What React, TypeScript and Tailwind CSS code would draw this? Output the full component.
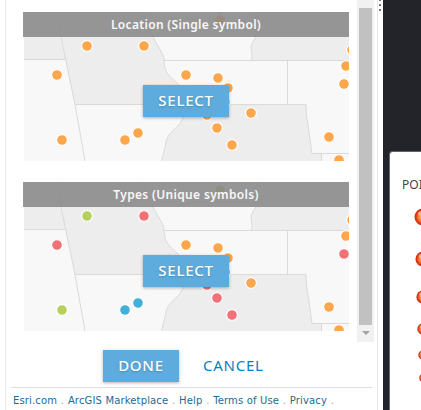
import React from "react";

const ORANGE = "#fda64b";
const RED = "#f07277";
const GREEN = "#b7cf5c";
const BLUE = "#42b0d9";

const points: [number, number, string][] = [
  [220, 20, GREEN],
  [87, 46, GREEN],
  [144, 46, RED],
  [57, 75, RED],
  [186, 75, ORANGE],
  [218, 78, ORANGE],
  [228, 88, ORANGE],
  [225, 102, RED],
  [207, 115, RED],
  [217, 128, RED],
  [232, 145, RED],
  [251, 113, ORANGE],
  [62, 140, GREEN],
  [125, 140, BLUE],
  [138, 133, BLUE],
  [329, 137, ORANGE],
  [339, 160, ORANGE],
  [344, 84, RED],
  [346, 66, ORANGE],
  [352, 50, ORANGE],
];

function MapPicture({ unique }: { unique: boolean }) {
  return (
    <svg viewBox="24 12 325 149" className="ml-px block h-[149px] w-[325px]">
      <rect x="24" y="12" width="325" height="149" fill="#f8f8f8" />
      <g fill="#ededed">
        <path d="M24 12H57L61 37L65.500 59.500H24Z" />
        <path d="M57 12H143L153 37C158 47 163.500 53 164 60C164 72 169 76 178 84L188 104.500H75L61 37Z" />
        <path d="M256 12V37C252 43 250 46 251.500 51Q253 56 251 60.500H349V12Z" />
        <path d="M188 104.500H306Q306 116 308 125L312 153.500H321.500V161H161.500C164 151 165 148 166.500 140C170 130 181 127 183.500 116Z" />
      </g>
      <g fill="none" stroke="#dadada" strokeWidth="1">
        <path d="M57 12L61 37L75 104.500L85 161M24 59.500H65.500M75 104.500H306Q306 116 308 125L312 153.500H349M321.500 153.500V161" />
        <path d="M143 12L153 37C158 47 163.500 53 164 60C164 72 169 76 178 84L188 104.500L183.500 116C181 127 170 130 166.500 140C165 148 164 151 161.500 161" />
        <path d="M164 60.500H349M287.500 60.500V104.500M256 12V37C252 43 250 46 251.500 51Q253 56 251 60.500" />
      </g>
      {points.map(([x, y, color]) => (
        <circle key={`${x}-${y}`} cx={x} cy={y} r="5.400" fill={unique ? color : ORANGE} stroke="#fff" strokeWidth="1.200" />
      ))}
    </svg>
  );
}

function StyleCard({ title, unique = false }: { title: string; unique?: boolean }) {
  return (
    <section className="relative h-[149px] w-[326px] shrink-0 overflow-hidden">
      <MapPicture unique={unique} />
      <h2 className="absolute inset-x-0 top-0 h-[25px] bg-[#888888]/87 text-center font-['Noto_Sans',sans-serif] text-[12px] leading-[25px] font-semibold tracking-[0.330px] whitespace-nowrap text-[#f8f8f8]">
        {title}
      </h2>
      <button className="absolute top-[73px] left-[120px] h-8 w-[86px] bg-[#5dacdd] pb-[2px] text-center font-['Noto_Sans',sans-serif] text-[15px] leading-[30px] font-medium tracking-[0.750px] text-white shadow-[0_1px_3px_rgba(0,0,0,0.300)] [text-shadow:0_1px_2px_rgba(0,0,0,0.200)]">
        SELECT
      </button>
    </section>
  );
}

function Scrollbar() {
  return (
    <div className="flex h-[342px] w-[17px] flex-col items-center bg-[#f1f1f1]">
      <div className="mt-2 h-[317px] w-[13px] bg-[#c1c1c1]" />
      <svg viewBox="0 0 8 4" className="mt-[6px] h-1 w-2">
        <path d="M0 0H8L4 4Z" fill="#a3a3a3" />
      </svg>
    </div>
  );
}

function Footer() {
  return (
    <footer className="ml-[5px] flex h-[23px] w-[361px] gap-[3.700px] border-t border-[#dfdfdf] pt-[6px] pl-[2px] font-['DejaVu_Sans',sans-serif] text-[10px] leading-[14px] tracking-[0.150px] whitespace-nowrap text-[#216b97]">
      <a>Esri.com</a>
      <span className="text-[#aaa]">.</span>
      <a>ArcGIS Marketplace</a>
      <span className="text-[#aaa]">.</span>
      <a>Help</a>
      <span className="text-[#aaa]">.</span>
      <a>Terms of Use</a>
      <span className="text-[#aaa]">.</span>
      <a>Privacy</a>
      <span className="text-[#aaa]">.</span>
    </footer>
  );
}

function LegendBall({ id, className }: { id: string; className: string }) {
  return (
    <svg viewBox="0 0 18 18" className={`block shrink-0 ${className}`}>
      <defs>
        <radialGradient id={id} cx="50%" cy="50%" r="50%">
          <stop offset="0" stopColor="#fff0a0" />
          <stop offset=".3" stopColor="#ffb45b" />
          <stop offset=".65" stopColor="#f06020" />
          <stop offset=".87" stopColor="#d83010" />
          <stop offset="1" stopColor="#c03018" />
        </radialGradient>
      </defs>
      <circle cx="9" cy="9" r="8.500" fill={`url(#${id})`} />
      <ellipse cx="8" cy="5.500" rx="4" ry="2.300" fill="#ffe6c4" opacity=".55" />
    </svg>
  );
}

export default function App() {
  return (
    <div className="flex h-[410px] w-[421px] overflow-hidden bg-white">
      <div className="w-[5px] shrink-0" />
      <aside className="flex w-[373px] shrink-0 flex-col border-x border-[#eaeaea]">
        <div className="flex h-[342px]">
          <div className="ml-[17px] flex w-[334px] flex-col gap-[21px] pt-3">
            <StyleCard title="Location (Single symbol)" />
            <StyleCard title="Types (Unique symbols)" unique />
          </div>
          <Scrollbar />
        </div>
        <div className="flex h-[45px] items-start pt-2 pl-[97px] font-['Noto_Sans',sans-serif] text-[15px] leading-[30px] font-medium tracking-[0.750px]">
          <button className="h-8 w-[76px] bg-[#5dacdd] pb-[2px] text-white shadow-[0_1px_3px_rgba(0,0,0,0.300)] [text-shadow:0_1px_2px_rgba(0,0,0,0.200)]">
            DONE
          </button>
          <button className="ml-6 h-8 pb-[2px] font-normal text-[#087fc3]">CANCEL</button>
        </div>
        <Footer />
      </aside>
      <div className="flex w-[5px] shrink-0 flex-col items-start gap-[3px]">
        <i className="ml-px h-px w-0.5 bg-[#777]" />
        <i className="ml-px h-0.5 w-0.5 bg-[#777]" />
        <i className="ml-px h-0.5 w-0.5 bg-[#777]" />
      </div>
      <main className="flex w-[38px] shrink-0 flex-col bg-[#222429] pt-[151px] pl-[6px]">
        <div className="h-[259px] w-[60px] rounded-tl-[4px] border-t border-l border-[#65666a] bg-white pt-[25px] pl-[12px]">
          <div className="font-['Noto_Sans',sans-serif] text-[12px] leading-4 text-[#444]">POI</div>
          <div className="flex w-[42px] flex-col items-center">
            <LegendBall id="ball-a" className="mt-[15px] size-[18px]" />
            <LegendBall id="ball-b" className="mt-[25px] size-4" />
            <LegendBall id="ball-c" className="mt-[23px] size-[14px]" />
            <LegendBall id="ball-d" className="mt-[19px] size-3" />
            <LegendBall id="ball-e" className="mt-[15px] size-[10px]" />
            <LegendBall id="ball-f" className="mt-[14px] size-2" />
          </div>
        </div>
      </main>
    </div>
  );
}
